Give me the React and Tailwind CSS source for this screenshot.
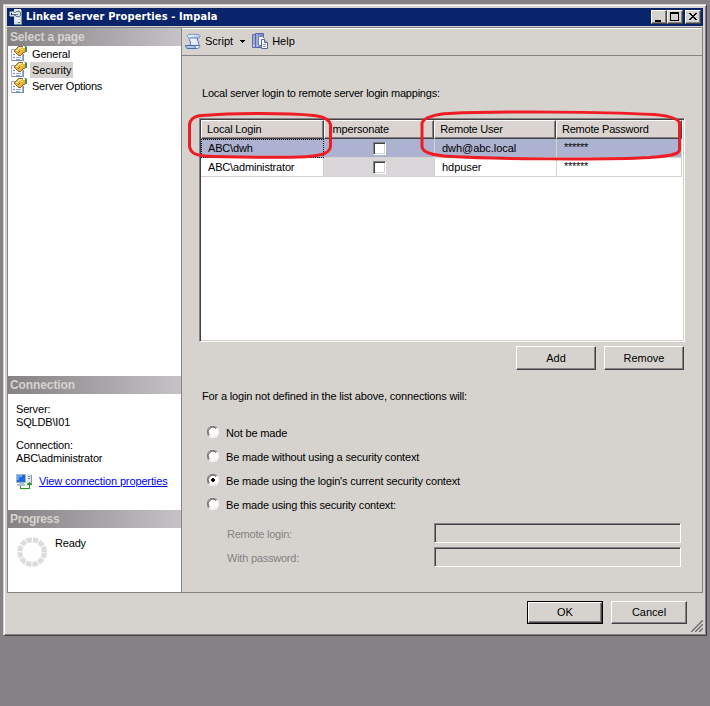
import clsx from "clsx"

const PAGES = [
  { name: "General" },
  { name: "Security", selected: true, className: "tracking-[-0.05px]" },
  { name: "Server Options", className: "tracking-[-0.23px]" },
]

const LOGINS = [
  { local: "ABC\\dwh", user: "dwh@abc.local", selected: true },
  { local: "ABC\\administrator", user: "hdpuser" },
]

const OPTIONS = [
  "Not be made",
  "Be made without using a security context",
  "Be made using the login's current security context",
  "Be made using this security context:",
]

function ServerIcon() {
  return (
    <svg width="16" height="16" viewBox="0 0 16 16" shapeRendering="crispEdges">
      <path d="M5 0h7v16H5z" fill="#d3dde4" />
      <path d="M5 0h7v1H5z" fill="#f7fbff" />
      <path d="M12 1h1v14h-1z" fill="#8698a8" />
      <path d="M5 15h8v1H5z" fill="#63788a" />
      <path d="M6 9h5v1H6zM6 11h5v1H6z" fill="#f7fbff" />
      <path d="M9 13h2v1H9z" fill="#31a331" />
      <path d="M1 2h4v1H1zM1 7h4v1H1zM0 3h1v4H0zM5 3h1v1H5zM5 6h1v1H5zM7 2h4v1H7zM7 7h4v1H7zM11 3h1v4h-1zM6 3h1v1H6zM6 6h1v1H6z" fill="#6d8494" />
      <path d="M1 3h4v1H1zM1 6h4v1H1zM1 4h1v2H1zM7 3h4v1H7zM7 6h4v1H7zM10 4h1v2h-1z" fill="#cbdae4" />
      <path d="M3 4h6v1H3z" fill="#eff7fb" />
      <path d="M3 5h6v1H3z" fill="#526d7c" />
    </svg>
  )
}

function PageIcon() {
  return (
    <svg width="16" height="16" viewBox="0 0 16 16" shapeRendering="crispEdges">
      <path d="M0 3h12v12H0z" fill="#a5b2ce" />
      <path d="M1 4h10v10H1z" fill="#fff" />
      <path d="M1 14h12v1H1zM12 8h1v7h-1z" fill="#7b8cb5" />
      <path d="M2 8h2v1H2zM2 11h2v1H2z" fill="#6b82c6" />
      <path d="M5 11h5v1H5zM5 13h4v1H5z" fill="#94a6de" />
      <path d="M7 1h5v1H7zM6 2h8v1H6zM5 3h9v1H5zM4 4h10v1H4zM4 5h10v1H4zM5 6h8v1H5zM6 7h6v1H6zM7 8h4v1H7z" fill="#efb431" />
      <path d="M8 1h3v1H8zM7 2h3v1H7zM6 3h2v1H6zM5 4h2v1H5zM10 3h2v1h-2z" fill="#ffe38c" />
      <path d="M7 0h5v1H7zM6 1h1v1H6zM5 2h1v1H5zM4 3h1v1H4zM3 4h1v2H3zM4 6h1v1H4zM5 7h1v1H5zM6 8h1v1H6zM7 9h3v1H7zM10 8h1v1h-1zM11 7h1v1h-1zM12 6h2v1h-2zM8 5h1v1H8zM7 6h1v1H7z" fill="#84693a" />
      <path d="M14 1h2v5h-2z" fill="#428e52" />
      <path d="M13 0h3v1h-3z" fill="#8cba94" />
    </svg>
  )
}

function ScriptIcon() {
  return (
    <svg width="17" height="17" viewBox="0 0 17 17">
      <path d="M4 1h10l2 1.500V5h-3.500c-.8 1.500 1.500 5 1.200 7.500L5.500 13C7 10 3.500 7 3.500 4.500 2 4.500 1.500 1.500 4 1z" fill="#dce9fb" />
      <path d="M13 1.500c2-.3 3.500 3 0 3.500H5" fill="#bed2f0" stroke="#6480b9" />
      <path d="M3.800 1.300H13M3.800 1.300C1.500 2 2 4.500 4 4.500" fill="none" stroke="#7891c4" />
      <path d="M4 4.500c0 3 2.500 4.500 1.200 8M12.300 5c0 3 2 4.500 1.500 7.500" fill="none" stroke="#5975b3" />
      <path d="M.5 12.500h9.500c0 2 1 2 1.500 3H3c-1.500 0-2.500-1.500-2.500-3z" fill="#aac4ec" stroke="#4867a9" />
      <path d="M10 12.500h4.500c1 2-1 3-3 3-1 0-1.500-1.500-1.500-3z" fill="#e4eefc" stroke="#5975b3" />
      <path d="M6 7h4.500M7 9h4.500" stroke="#fff" />
    </svg>
  )
}

function HelpIcon() {
  return (
    <svg width="17" height="17" viewBox="0 0 17 17">
      <path d="M.5 1.500h3v13h-3z" fill="#98a8dd" stroke="#6571ad" />
      <path d="M3.500.5h8v14h-8z" fill="#8290cc" stroke="#5965a6" />
      <path d="M5 1v13" stroke="#b7c3ef" />
      <path d="M1 12.500h2M5 12.500h3" stroke="#d7e1ff" />
      <path d="M6.500 3.500h4l2 2v7h-6z" fill="#eff5ff" stroke="#6f82ad" />
      <path d="M9.500 6.500h3l3 3v6h-6z" fill="#fff" stroke="#596b91" />
      <path d="M12.500 6.500v3h3" fill="#b3c7ed" stroke="#596b91" />
      <path d="M11 11.500h3M11 13.500h3" stroke="#83a1cf" />
    </svg>
  )
}

function ConnectionIcon() {
  return (
    <svg width="17" height="16" viewBox="0 0 17 16" shapeRendering="crispEdges">
      <path d="M0 0h10v9H0z" fill="#a5b6c6" />
      <path d="M1 1h8v7H1z" fill="#2368d8" />
      <path d="M1 1h5v2H3v3H1z" fill="#63a6f4" />
      <path d="M3 9h5v1H3zM1 10h8v2H1z" fill="#b5c3d0" />
      <path d="M11 0h4v10h-4z" fill="#dde5eb" />
      <path d="M15 1h1v9h-1zM11 9h4v1h-4z" fill="#8396a8" />
      <path d="M12 2h2v1h-2zM12 4h2v1h-2z" fill="#768b9d" />
      <path d="M4 12h1v2h8v-3h-2v-1h1V9h1V8h1v1h1v1h1v1h-2v4H4z" fill="#219c21" />
    </svg>
  )
}

function Spinner() {
  return (
    <svg width="30" height="30" viewBox="0 0 30 30">
      <circle cx="15" cy="15" r="12.300" fill="none" stroke="#dedbde" strokeWidth="5" strokeDasharray="5.340 1.100" strokeDashoffset="-0.550" />
    </svg>
  )
}

function Radio({ checked }) {
  return (
    <svg width="12" height="12" viewBox="0 0 12 12">
      <circle cx="6" cy="6" r="5" fill="#fff" />
      <path d="M1.800 10.200A5.500 5.500 0 0 1 10.200 1.800" fill="none" stroke="#848284" />
      <path d="M2.500 9A4.600 4.600 0 0 1 9 2.500" fill="none" stroke="#424142" />
      <path d="M10.200 1.800A5.500 5.500 0 0 1 1.800 10.200" fill="none" stroke="#fff" />
      {checked && <path d="M5 4h2v1h1v2H7v1H5V7H4V5h1z" fill="#000" shapeRendering="crispEdges" />}
    </svg>
  )
}

function SideHeader({ children, className }) {
  return (
    <div className="h-[18px] shrink-0 bg-linear-to-r from-[#848284] to-[#c6c3c6] pl-[2px] text-[12px] leading-[18px] font-bold text-[#d6d3ce]">
      <span className={className}>{children}</span>
    </div>
  )
}

function Button({ children, className }) {
  return (
    <button className={clsx("border border-t-white border-l-white border-r-[#424142] border-b-[#424142] bg-[#d6d3ce] tracking-normal shadow-[inset_-1px_-1px_#848284]", className)}>
      {children}
    </button>
  )
}

function TitleButton({ children }) {
  return (
    <div className="h-[14px] w-4 border border-t-white border-l-white border-r-[#424142] border-b-[#424142] bg-[#d6d3ce] shadow-[inset_-1px_-1px_#848284]">
      <svg width="14" height="12" viewBox="0 0 14 12" shapeRendering="crispEdges">{children}</svg>
    </div>
  )
}

function HeaderCell({ children, className }) {
  return (
    <div className={clsx("h-[19px] border border-t-white border-l-white border-r-[#424142] border-b-[#424142] bg-[#dad3d0] pl-[5px] leading-[17px] shadow-[inset_-1px_-1px_#848284]", className)}>
      {children}
    </div>
  )
}

function Checkbox() {
  return (
    <div className="h-[13px] w-[13px] border border-t-[#848284] border-l-[#848284] border-r-white border-b-white bg-white shadow-[inset_1px_1px_#424142,inset_-1px_-1px_#d6d3ce]" />
  )
}

function LoginRow({ local, user, selected }) {
  return (
    <div className={clsx("flex h-[19px] leading-[18px]", selected ? "bg-[#adb2d0]" : "bg-white")}>
      <div className={clsx("w-[123px] border-r border-b pl-[7px]", selected ? "border-dotted border-black outline-1 -outline-offset-1 outline-dotted outline-black" : "border-[#d6d3ce]")}>
        {local}
      </div>
      <div className={clsx("flex w-[111px] justify-center border-r border-b border-[#d6d3ce] pt-[3px]", !selected && "bg-[#dad7da]")}>
        <Checkbox />
      </div>
      <div className="w-[122px] border-r border-b border-[#d6d3ce] pl-[7px] tracking-[-0.05px]">{user}</div>
      <div className="w-[125px] border-r border-b border-[#d6d3ce] pl-[7px] leading-[16px] tracking-[-0.280px]">******</div>
    </div>
  )
}

function Field({ label }) {
  return (
    <div className="flex h-6 items-start">
      <span className="w-[207px] leading-[22px] tracking-[-0.23px] text-[#848284]">{label}</span>
      <div className="h-5 w-[247px] border border-t-[#848284] border-l-[#848284] border-r-white border-b-white shadow-[inset_1px_1px_#424142]" />
    </div>
  )
}

function Sidebar() {
  return (
    <div className="flex w-[175px] flex-col border-x border-b border-[#848284] bg-white">
      <SideHeader>Select a page</SideHeader>
      <div className="h-[330px]">
        {PAGES.map(page => (
          <div key={page.name} className="flex h-4 items-center pl-[3px]">
            <PageIcon />
            <span className={clsx("ml-[3px] h-4 px-[2px] leading-4", page.selected && "bg-[#d6d3ce]", page.className)}>
              {page.name}
            </span>
          </div>
        ))}
      </div>
      <SideHeader className="tracking-[-0.1px]">Connection</SideHeader>
      <div className="h-[116px] pt-[9px] pl-2 leading-[13px]">
        <p>Server:</p>
        <p>SQLDB\I01</p>
        <p className="mt-[10px]">Connection:</p>
        <p>ABC\administrator</p>
        <div className="mt-[9px] flex gap-[6px]">
          <ConnectionIcon />
          <a className="leading-[15px] tracking-[-0.13px] text-[#0000ff] underline">View connection properties</a>
        </div>
      </div>
      <SideHeader className="tracking-[-0.35px]">Progress</SideHeader>
      <div className="flex gap-2 pt-[9px] pl-[9px]">
        <Spinner />
        <span className="leading-3">Ready</span>
      </div>
    </div>
  )
}

export default function App() {
  return (
    <div className="h-[706px] w-[710px] overflow-hidden bg-[#848284] pt-1 pl-[3px] font-['Liberation_Sans',Arial,sans-serif] text-[11px] tracking-[-0.17px] whitespace-nowrap text-black">
      <div className="relative flex h-[632px] w-[704px] flex-col border border-t-[#d6d3ce] border-l-[#d6d3ce] border-r-[#424142] border-b-[#424142] bg-[#d6d3ce] p-[3px] shadow-[inset_1px_1px_#fff,inset_-1px_-1px_#848284]">
        {/* title bar */}
        <div className="flex h-[18px] w-[696px] shrink-0 items-center bg-[#08246b] px-[2px]">
          <ServerIcon />
          <span className="ml-[1px] flex-1 pt-px font-['DejaVu_Sans_Condensed','DejaVu_Sans',sans-serif] text-[11px] font-bold tracking-[0.12px] text-white">
            Linked Server Properties - Impala
          </span>
          <TitleButton><path d="M3 9h6v2H3z" /></TitleButton>
          <TitleButton><path d="M2 1h9v9H2zM3 3v6h7V3z" fillRule="evenodd" /></TitleButton>
          <div className="ml-[2px]">
            <TitleButton>
              <path d="M3 2h2v1h1v1h2V3h1V2h2v1h-1v1H9v1H8v1h1v1h1v1h1v1H9V8H8V7H6v1H5v1H3V8h1V7h1V6h1V5H5V4H4V3H3z" />
            </TitleButton>
          </div>
        </div>

        <div className="mt-px flex h-[566px] w-[696px] border-t border-[#848284]">
          <Sidebar />
          <div className="flex-1 border-r border-b border-[#848284]">
            {/* toolbar */}
            <div className="flex h-7 items-center border-t border-b border-t-white border-b-[#848284] pb-px pl-[3px] tracking-normal">
              <ScriptIcon />
              <span className="ml-[3px]">Script</span>
              <svg className="ml-[7px]" width="5" height="3" shapeRendering="crispEdges"><path d="M0 0h5v1H4v1H3v1H2V2H1V1H0z" /></svg>
              <span className="ml-[7px]"><HelpIcon /></span>
              <span className="ml-[3px]">Help</span>
            </div>

            <div className="pl-[17px]">
              <p className="mt-[30px] ml-[3px] h-[14px] leading-[14px] tracking-[-0.23px]">Local server login to remote server login mappings:</p>
              <div className="mt-[18px] h-[224px] w-[486px] border border-t-[#848284] border-l-[#848284] border-r-white border-b-white bg-white shadow-[inset_1px_1px_#424142,inset_-1px_-1px_#d6d3ce]">
                <div className="ml-px w-[481px] pt-px">
                  <div className="flex">
                    <HeaderCell className="w-[123px]">Local Login</HeaderCell>
                    <HeaderCell className="w-[111px]">Impersonate</HeaderCell>
                    <HeaderCell className="w-[122px] tracking-[-0.23px]">Remote User</HeaderCell>
                    <HeaderCell className="w-[126px] shrink-0 tracking-[-0.22px]">Remote Password</HeaderCell>
                  </div>
                  {LOGINS.map(login => <LoginRow key={login.local} {...login} />)}
                </div>
              </div>
              <div className="mt-1 flex w-[485px] justify-end gap-2">
                <Button className="h-6 w-20">Add</Button>
                <Button className="h-6 w-20">Remove</Button>
              </div>

              <p className="mt-[19px] ml-[3px] h-[14px] leading-[14px]">For a login not defined in the list above, connections will:</p>
              <div className="mt-[18px] ml-2">
                {OPTIONS.map((option, i) => (
                  <div key={option} className="flex h-6 items-start pt-[5px]">
                    <Radio checked={i === 2} />
                    <span className="ml-[7px] leading-[14px]">{option}</span>
                  </div>
                ))}
              </div>
              <div className="mt-[6px] ml-7">
                <Field label="Remote login:" />
                <Field label="With password:" />
              </div>
            </div>
          </div>
        </div>

        <div className="mt-2 flex justify-end gap-2 pr-[16px]">
          <div className="border border-black">
            <Button className="block h-[21px] w-[74px]">OK</Button>
          </div>
          <Button className="h-[23px] w-[76px]">Cancel</Button>
        </div>
        <svg className="absolute right-[3px] bottom-[3px]" width="13" height="13" viewBox="0 0 13 13">
          <path d="M0 13L13 0M4 13l9-9M8 13l5-5" stroke="#fff" />
          <path d="M1 13L13 1M5 13l8-8M9 13l4-4" stroke="#6b696b" strokeWidth="1.500" />
        </svg>

        {/* hand drawn highlights over the grid */}
        <svg className="pointer-events-none absolute -top-[5px] -left-1" width="710" height="200" viewBox="0 0 710 200">
          <g fill="none" stroke="#ef1c24" strokeWidth="3">
            <path d="M202 115.500C220 114 239 113.500 260 113.500S299 114 314 115.500C326 117 330.500 121 330.500 126V146C330 153 323 155 308 156.500C291 158 222 157 205 156C194 155 190 152 189.500 146V125C190 119 194 116 202 115.500Z" />
            <path d="M449 113.500C505 111 603 112 654 114.500C671 116 679.500 119 679.500 124V150C679 155 666 156 650 157.500C603 160 497 159 450 156.500C430 155 423 152 422 147V123C423 118 435 114 449 113.500Z" />
          </g>
        </svg>
      </div>
    </div>
  )
}
